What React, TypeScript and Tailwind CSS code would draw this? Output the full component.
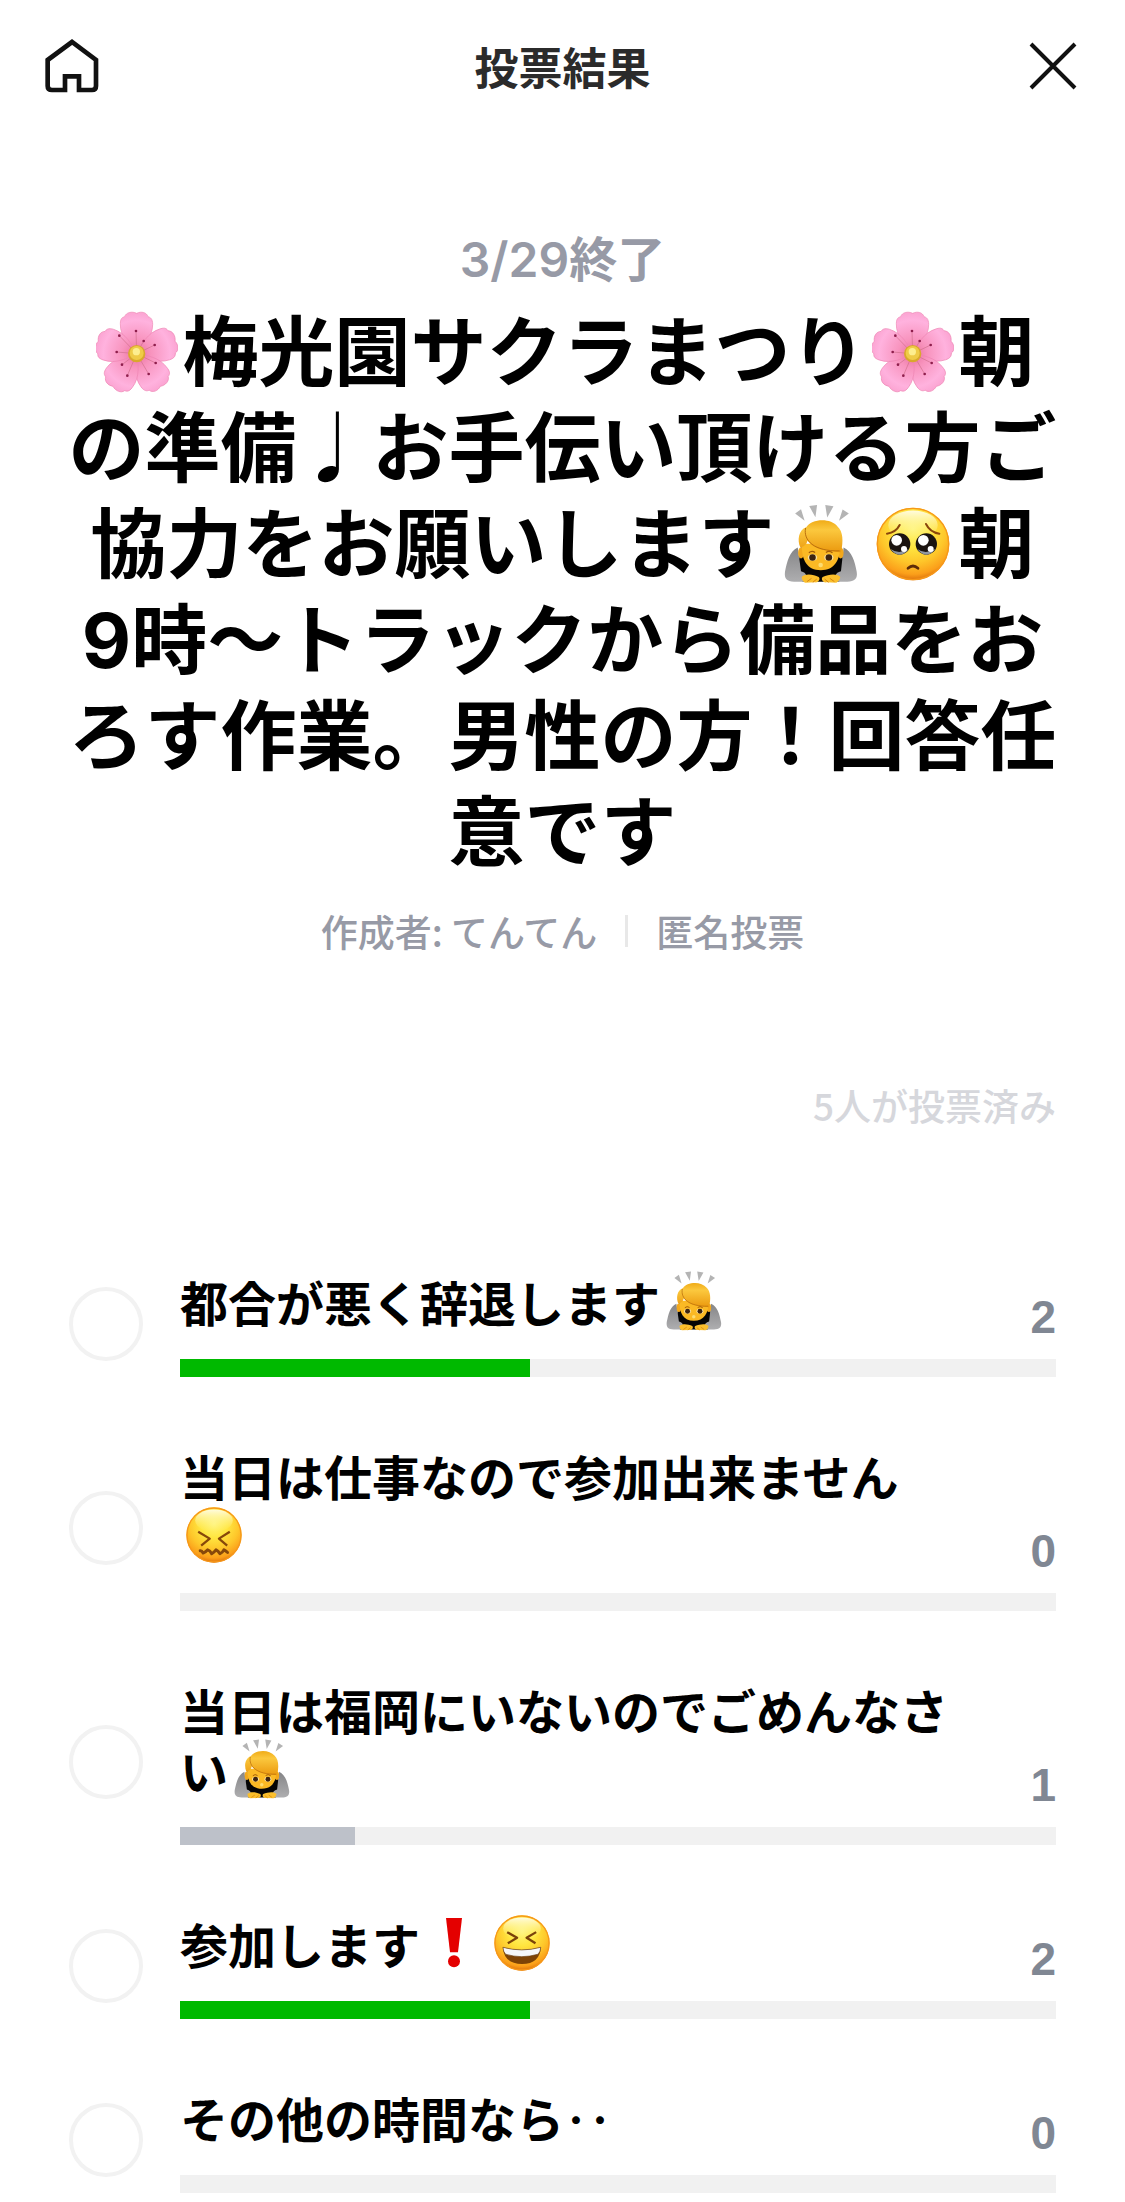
import { useId } from 'react';
import type { ReactNode } from 'react';

type EmojiName = 'blossom' | 'bow' | 'pleading' | 'confounded' | 'laughing' | 'exclamation';

interface VoteOption {
  id: number;
  label: string;
  emojis: EmojiName[];
  votes: number;
}

const TOTAL_VOTES = 5;

const options: VoteOption[] = [
  { id: 1, label: '都合が悪く辞退します', emojis: ['bow'], votes: 2 },
  { id: 2, label: '当日は仕事なので参加出来ません', emojis: ['confounded'], votes: 0 },
  { id: 3, label: '当日は福岡にいないのでごめんなさい', emojis: ['bow'], votes: 1 },
  { id: 4, label: '参加します', emojis: ['exclamation', 'laughing'], votes: 2 },
  { id: 5, label: 'その他の時間なら‥', emojis: [], votes: 0 },
];

const topVotes = Math.max(...options.map((option) => option.votes));

const HomeIcon = () => (
  <svg viewBox="45 42 162 162" className="w-[54px] h-[54px]" fill="none" stroke="#111" strokeWidth="14">
    <path d="M53 105 L126 51 L198 105 V183 Q198 195 186 195 H147 V154 H105 V195 H66 Q53 195 53 183 Z" />
  </svg>
);

const CloseIcon = () => (
  <svg viewBox="0 0 54 54" className="w-[54px] h-[54px]" fill="none" stroke="#111" strokeWidth="4">
    <path d="M5 5 L49 49 M49 5 L5 49" />
  </svg>
);

// Yellow ball shared by every face emoji
const Face = ({ cx, cy, r, fill, children }: { cx: number; cy: number; r: number; fill: string; children: ReactNode }) => (
  <>
    <radialGradient id={fill} cx="0.5" cy="0.3" r="0.7">
      <stop offset="0" stopColor="#fff47a" />
      <stop offset="0.35" stopColor="#ffe640" />
      <stop offset="0.65" stopColor="#fec62a" />
      <stop offset="0.88" stopColor="#fb9f1a" />
      <stop offset="1" stopColor="#dd720c" />
    </radialGradient>
    <linearGradient id={`${fill}shine`} x1="0" y1="0" x2="0" y2="1">
      <stop offset="0" stopColor="#fffde8" stopOpacity="0.95" />
      <stop offset="1" stopColor="#fff47a" stopOpacity="0" />
    </linearGradient>
    <circle cx={cx} cy={cy} r={r} fill={`url(#${fill})`} />
    <circle cx={cx} cy={cy} r={r - 2} fill="none" stroke="#f6981a" strokeWidth="4" />
    <ellipse cx={cx} cy={cy - r * 0.52} rx={r * 0.68} ry={r * 0.4} fill={`url(#${fill}shine)`} />
    {children}
  </>
);

const Blossom = ({ fill }: { fill: string }) => (
  <svg viewBox="28 34 246 246" className="w-[82px] h-[82px]">
    <radialGradient id={fill} gradientUnits="userSpaceOnUse" cx="150" cy="162" r="125">
      <stop offset="0" stopColor="#e8709f" />
      <stop offset="0.35" stopColor="#f894be" />
      <stop offset="0.8" stopColor="#ffb2de" />
      <stop offset="1" stopColor="#fba4d2" />
    </radialGradient>
    {[0, 72, 144, 216, 288].map((angle) => (
      <g key={angle} transform={`rotate(${angle} 150 162)`}>
        <path
          d="M150 162 C128 140 100 112 101 72 C101 55 108 53 114 51 C118 38 136 34 150 41 C164 34 180 38 184 51 C191 53 198 57 198 74 C198 112 172 140 150 162 Z"
          fill={`url(#${fill})`}
          stroke="#ee86b4"
          strokeWidth="2"
        />
      </g>
    ))}
    <g stroke="#d0708c" strokeWidth="2">
      <path d="M150 162 L148 94 M150 162 L98 108 M150 162 L90 157 M150 162 L106 195 M150 162 L122 228 M150 162 L186 223 M150 162 L207 190 M150 162 L204 136 M150 162 L171 124" />
    </g>
    <g fill="#8e1e4c">
      <circle cx="148" cy="94" r="4" />
      <circle cx="98" cy="108" r="4" />
      <circle cx="90" cy="157" r="4" />
      <circle cx="106" cy="195" r="4" />
      <circle cx="122" cy="228" r="4" />
      <circle cx="186" cy="223" r="4" />
      <circle cx="207" cy="190" r="4" />
      <circle cx="204" cy="136" r="4" />
      <circle cx="171" cy="124" r="4" />
    </g>
    <circle cx="150" cy="162" r="26" fill="#d9a82c" />
    <circle cx="150" cy="160" r="21" fill="#efcb47" />
    <circle cx="149" cy="156" r="11" fill="#fdee8f" />
  </svg>
);

const Bow = ({ fill, size }: { fill: string; size: string }) => (
  <svg viewBox="58 40 226 242" className={size}>
    <linearGradient id={`${fill}hair`} x1="0" y1="0" x2="0" y2="1">
      <stop offset="0" stopColor="#f0ac18" />
      <stop offset="0.3" stopColor="#fbc83e" />
      <stop offset="1" stopColor="#eb990e" />
    </linearGradient>
    <linearGradient id={`${fill}sleeve`} x1="0" y1="0" x2="0" y2="1">
      <stop offset="0" stopColor="#858587" />
      <stop offset="1" stopColor="#aeaeb0" />
    </linearGradient>
    <g fill="#b4b4b4">
      <path d="M92 68 L110 55 L121 90 Z M135 45 L159 42 L154 79 Z M184 42 L209 46 L190 80 Z M237 56 L256 68 L226 90 Z" />
    </g>
    <path d="M112 170 L230 170 L248 250 L226 276 L115 276 L95 248 Z" fill="#050505" />
    <path
      d="M100 172 C74 184 68 214 61 246 C58 268 68 277 92 276 L122 276 C130 262 128 248 110 244 Z M240 172 C266 184 274 214 280 246 C284 268 272 277 248 276 L220 276 C210 262 214 248 232 244 Z"
      fill={`url(#${fill}sleeve)`}
    />
    <path d="M112 262 C124 250 148 254 164 262 C170 268 164 280 152 278 L122 279 Q112 274 112 262 Z" fill="#fbbf2c" />
    <path d="M230 262 C218 250 194 254 176 262 C170 268 176 280 188 278 L218 279 Q228 274 230 262 Z" fill="#fbbf2c" />
    <path d="M128 276 L142 266 M146 278 L158 268 M212 276 L198 266 M194 278 L182 268" stroke="#d58510" strokeWidth="3" />
    <ellipse cx="110" cy="188" rx="9" ry="17" fill="#f3a81b" />
    <ellipse cx="231" cy="188" rx="9" ry="17" fill="#f3a81b" />
    <path d="M112 160 L230 160 C230 212 212 240 170 241 C128 240 112 212 112 160 Z" fill="#fbb924" />
    <path
      d="M108 172 C98 150 102 118 126 110 C142 84 200 80 222 108 C238 122 240 152 232 186 C206 184 150 182 130 150 C126 166 116 168 108 172 Z"
      fill={`url(#${fill}hair)`}
    />
    <path d="M124 112 C116 150 150 184 228 182" fill="none" stroke="#b96d0c" strokeWidth="3" />
    <path d="M134 188 Q143 180 153 187 M186 187 Q196 180 206 188" fill="none" stroke="#a35c08" strokeWidth="4" />
    <ellipse cx="145" cy="202" rx="14" ry="10" fill="#fbe3a4" />
    <ellipse cx="195" cy="202" rx="14" ry="10" fill="#fbe3a4" />
    <circle cx="145" cy="202" r="10" fill="#3d2410" />
    <circle cx="195" cy="202" r="10" fill="#3d2410" />
    <circle cx="170" cy="225" r="7" fill="#fddc72" />
  </svg>
);

const Pleading = ({ fill }: { fill: string }) => (
  <svg viewBox="340 52 222 222" className="w-[74px] h-[74px]">
    <Face cx={451} cy={163} r={109} fill={fill}>
      <path d="M373 132 Q400 128 411 106 M530 132 Q502 128 490 103" fill="none" stroke="#8a450c" strokeWidth="6" strokeLinecap="round" />
      <circle cx="411" cy="163" r="32" fill="#1b1410" />
      <circle cx="491" cy="163" r="32" fill="#1b1410" />
      <path d="M384 178 Q408 196 438 178 Q428 194 411 195 Q394 194 384 178 Z M464 178 Q488 196 518 178 Q508 194 491 195 Q474 194 464 178 Z" fill="#8f96a0" />
      <g fill="#fff">
        <circle cx="402" cy="152" r="16" />
        <circle cx="482" cy="152" r="16" />
        <circle cx="424" cy="178" r="9" />
        <circle cx="504" cy="178" r="9" />
      </g>
      <path d="M436 236 Q451 222 466 236" fill="none" stroke="#5e2c08" strokeWidth="8" strokeLinecap="round" />
    </Face>
  </svg>
);

const Confounded = ({ fill }: { fill: string }) => (
  <svg viewBox="47 52 170 170" className="w-[56px] h-[56px]">
    <Face cx={132} cy={137} r={84} fill={fill}>
      <path
        d="M84 127 L119 148 L93 169 M180 127 L147 148 L172 169"
        fill="none"
        stroke="#87480a"
        strokeWidth="7"
        strokeLinejoin="round"
      />
      <path
        d="M90 185 Q95 184 99 192 Q106 190 113 182 Q120 184 125 194 Q132 190 138 182 Q145 186 150 194 Q158 190 162 182 Q168 186 173 190"
        fill="none"
        stroke="#87480a"
        strokeWidth="9"
        strokeLinecap="round"
        strokeLinejoin="round"
      />
    </Face>
  </svg>
);

const Laughing = ({ fill }: { fill: string }) => (
  <svg viewBox="192 46 170 170" className="w-[56px] h-[56px]">
    <Face cx={277} cy={131} r={84} fill={fill}>
      <path
        d="M232 98 L262 115 L234 132 M320 98 L291 115 L318 132"
        fill="none"
        stroke="#7a420a"
        strokeWidth="7"
        strokeLinejoin="round"
      />
      <path d="M219 144 Q276 160 334 144 Q332 194 277 195 Q222 194 219 144 Z" fill="#7d4306" />
      <path d="M219 144 Q276 160 334 144 Q333 158 326 165 Q276 180 227 165 Q220 158 219 144 Z" fill="#f5f7fa" stroke="#6b3d10" strokeWidth="2" />
    </Face>
  </svg>
);

const Exclamation = () => (
  <svg viewBox="40 57 48 150" className="w-[16px] h-[50px]" fill="#e40000">
    <path d="M40 57 H88 L76 160 H52 Z" />
    <circle cx="64" cy="187" r="18" />
  </svg>
);

const emojiLabels: Record<EmojiName, string> = {
  blossom: '🌸',
  bow: '🙇',
  pleading: '🥺',
  confounded: '😖',
  laughing: '😆',
  exclamation: '❗',
};

const Emoji = ({ name, large = false }: { name: EmojiName; large?: boolean }) => {
  const fill = useId();

  return (
    <span
      role="img"
      aria-label={emojiLabels[name]}
      className={`inline-flex items-center justify-center align-top ${large ? 'w-[92px] h-24' : 'w-[68px] h-15'}`}
    >
      {name === 'blossom' && <Blossom fill={fill} />}
      {name === 'bow' && <Bow fill={fill} size={large ? 'w-[74px] h-[80px]' : 'w-[56px] h-[62px]'} />}
      {name === 'pleading' && <Pleading fill={fill} />}
      {name === 'confounded' && <Confounded fill={fill} />}
      {name === 'laughing' && <Laughing fill={fill} />}
      {name === 'exclamation' && <Exclamation />}
    </span>
  );
};

const Option = ({ option }: { option: VoteOption }) => {
  const percent = (option.votes / TOTAL_VOTES) * 100;
  const isTop = option.votes === topVotes;

  return (
    <li>
      <label className="flex items-center gap-[37px]">
        <input
          type="radio"
          name="vote"
          disabled
          className="appearance-none shrink-0 w-[74px] h-[74px] rounded-full border-4 border-[#f2f2f2] bg-white"
        />
        <span className="flex-1 min-w-0">
          <span className="flex items-end">
            <span className="flex-1 pb-7 text-[48px] leading-[60px] font-bold text-black">
              {option.label}
              {option.emojis.map((name) => (
                <Emoji key={name} name={name} />
              ))}
            </span>
            <span className="w-24 pb-3 text-right text-[46px] leading-[60px] font-bold font-['Liberation_Sans',sans-serif] text-[#808793]">
              {option.votes}
            </span>
          </span>
          <span className="block h-[18px] bg-[#f1f1f1]">
            <span
              className={`block h-full ${isTop ? 'bg-[#00b900]' : 'bg-[#bdc1c9]'}`}
              style={{ width: `${percent}%` }}
            />
          </span>
        </span>
      </label>
    </li>
  );
};

const Header = () => (
  <header className="flex items-center justify-between h-[132px] px-[45px]">
    <button type="button" aria-label="ホーム">
      <HomeIcon />
    </button>
    <h1 className="text-[44px] leading-[60px] font-bold text-[#2b2b2b]">投票結果</h1>
    <button type="button" aria-label="閉じる">
      <CloseIcon />
    </button>
  </header>
);

function App() {
  return (
    <div lang="ja" className="bg-white font-['Noto_Sans_CJK_JP',sans-serif]">
      <Header />
      <main className="pt-23">
        <section className="px-[68px] text-center">
          <div className="font-['Inter','Noto_Sans_CJK_JP',sans-serif]">
            <p className="text-[48px] leading-[72px] font-semibold text-[#979aa6]">3/29終了</p>
            <h2 className="mt-2 text-[76px] leading-[96px] font-bold text-black">
              <Emoji name="blossom" large />
              梅光園サクラまつり
              <Emoji name="blossom" large />
              朝の準備♩お手伝い頂ける方ご協力をお願いします
              <Emoji name="bow" large />
              <Emoji name="pleading" large />
              朝9時～トラックから備品をおろす作業。男性の方！回答任意です
            </h2>
          </div>
          <div className="flex items-center justify-center gap-7 mt-6 text-[37px] leading-[54px] font-medium text-[#979aa6]">
            <span>作成者: てんてん</span>
            <span className="w-[3px] h-8 bg-[#e8e8e8]" />
            <span>匿名投票</span>
          </div>
        </section>
        <section className="px-[69px]">
          <p className="mt-30 text-right text-[37px] leading-[54px] font-medium text-[#d6d7dc]">5人が投票済み</p>
          <ul className="flex flex-col gap-17 mt-[139px]">
            {options.map((option) => (
              <Option key={option.id} option={option} />
            ))}
          </ul>
        </section>
      </main>
    </div>
  );
}

export default App;
